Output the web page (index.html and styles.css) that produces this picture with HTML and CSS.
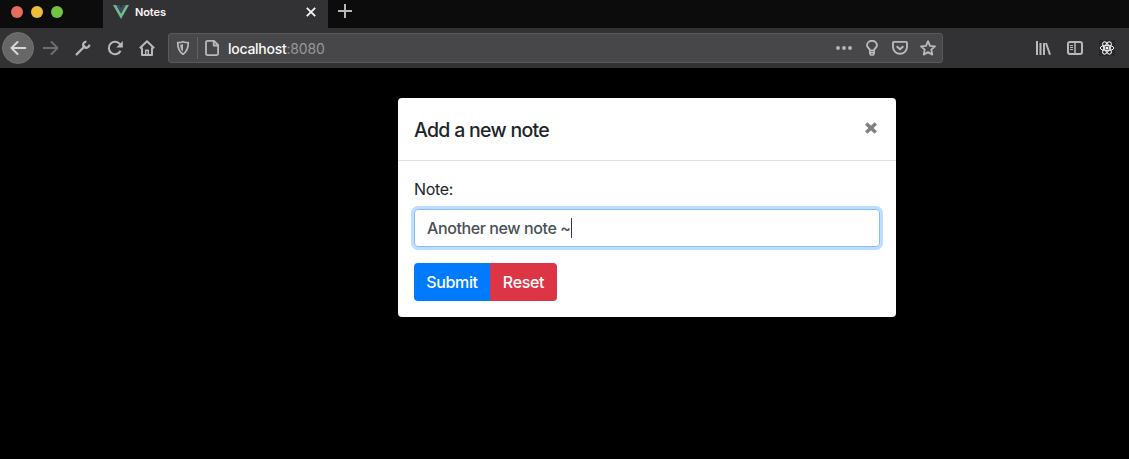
FILE: index.html
```
<!DOCTYPE html>
<html lang="en">
<head>
<meta charset="utf-8">
<title>Notes</title>
<link rel="stylesheet" href="styles.css">
</head>
<body>
<header class="tabs">
  <div class="lights"><i class="red"></i><i class="yellow"></i><i class="green"></i></div>
  <div class="tab">
    <svg class="logo" width="16" height="14" viewBox="0 0 16 14"><path fill="#72b98b" d="M0 0h3.200L8 8.400 12.800 0H16L8 14z"/><path fill="#3d4a63" d="M3.200 0h3L8 3.100 9.800 0h3L8 8.400z"/></svg>
    <span class="tab-title">Notes</span>
    <svg class="close-tab" width="10" height="10" viewBox="0 0 10 10"><path d="M.8.8l8.400 8.400M9.200.8L.8 9.200"/></svg>
  </div>
  <svg class="plus" width="14" height="14" viewBox="0 0 14 14"><path d="M7 0v14M0 7h14"/></svg>
</header>
<nav class="toolbar">
  <div class="back"><svg class="icon" width="16" height="16" viewBox="0 0 16 16"><path d="M15.500 8H1.500M7.500 2L1.500 8l6 6"/></svg></div>
  <svg class="icon forward" width="16" height="16" viewBox="0 0 16 16"><path d="M.5 8h14M8.500 2l6 6-6 6"/></svg>
  <svg class="icon" width="16" height="16" viewBox="0 0 16 16"><path d="M1.600 14.400L9 7" stroke-width="2.200" stroke-linecap="round"/><path d="M11.400 1.600A3.400 3.400 0 0 0 8.200 5.800L10.200 7.800A3.400 3.400 0 0 0 14.400 4.600" stroke-width="2.200"/><path d="M8.500 6l1.500 1.500" stroke-width="3"/></svg>
  <svg class="icon" width="16" height="16" viewBox="0 0 16 16"><path d="M13.200 4.500A6.200 6.200 0 1 0 13.600 10.700"/><path fill="currentColor" stroke="none" d="M15.800 1v6.500H9.300z"/></svg>
  <svg class="icon home" width="16" height="16" viewBox="0 0 16 16"><path d="M.8 8.300L8 1.200l7.200 7.100M3 7.500V15h10V7.500"/><path stroke-width="1.500" d="M6.700 14.500v-4.300h2.600v4.300"/></svg>
  <div class="address">
    <svg class="icon shield" width="14" height="16" viewBox="0 0 14 16"><path stroke-width="1.700" d="M7 1.700c2 .7 3.500.9 5.300.9 0 5.900-1.100 9-5.300 11.600C2.800 11.600 1.700 8.500 1.700 2.600 3.500 2.600 5 2.400 7 1.700z"/><path fill="currentColor" stroke="none" d="M7 4v7.500C5 9.800 4.300 8 4.200 4.800 5.300 4.700 6.200 4.500 7 4z"/></svg>
    <span class="divider"></span>
    <svg class="icon page" width="14" height="16" viewBox="0 0 14 16"><path stroke-width="1.800" d="M3 .9h6L13.100 5v8.600q0 1.500-1.500 1.500H2.500Q1 15.100 1 13.600V2.400Q1 .9 2.500.9zM8.700 1v4.500H13"/></svg>
    <span class="url">localhost<span class="port">:8080</span></span>
    <div class="actions">
      <svg class="icon" width="16" height="16" viewBox="0 0 16 16"><g fill="currentColor" stroke="none"><circle cx="2" cy="8" r="1.900"/><circle cx="8" cy="8" r="1.900"/><circle cx="14" cy="8" r="1.900"/></g></svg>
      <svg class="icon" width="16" height="16" viewBox="0 0 16 16"><path stroke-width="1.900" d="M6 10.500C6 8.500 3 7.900 3 5.300a5 4.500 0 0 1 10 0C13 7.900 10 8.500 10 10.500z"/><path stroke-width="1.500" d="M5.800 10.500v3l1 1.500h2.400l1-1.500v-3M6 12.700h4"/></svg>
      <svg class="icon" width="16" height="16" viewBox="0 0 16 16"><path stroke-width="1.900" d="M2 1.900h12q1 0 1 1V7A7 6.800 0 0 1 1 7V2.900q0-1 1-1z"/><path d="M4.700 6.200L8 9.300l3.300-3.100"/></svg>
      <svg class="icon" width="16" height="16" viewBox="0 0 16 16"><path stroke-width="1.800" d="M8 1.200l2 4.600 5 .5-3.700 3.300 1 5L8 12.100l-4.300 2.500 1-5L1 6.300l5-.5z"/></svg>
    </div>
  </div>
  <div class="tools">
    <svg class="icon" width="16" height="16" viewBox="0 0 16 16"><path d="M2 1v14M5.500 3v12M9 3v12M11 3l4 11.800"/></svg>
    <svg class="icon" width="16" height="16" viewBox="0 0 16 16"><rect x="1" y="2" width="14" height="12" rx="2"/><path stroke-width="1.500" d="M8 2v12"/><path stroke-width="1" d="M3 5.500h3M3 7.500h3M3 9.500h3"/></svg>
    <svg class="icon react" width="16" height="16" viewBox="0 0 16 16"><path fill="#27272a" stroke="none" d="M0 0h16v16H0z"/><g stroke-width="1"><ellipse cx="8" cy="8" rx="6.800" ry="2.700"/><ellipse cx="8" cy="8" rx="6.800" ry="2.700" transform="rotate(60 8 8)"/><ellipse cx="8" cy="8" rx="6.800" ry="2.700" transform="rotate(120 8 8)"/></g><circle cx="8" cy="8" r="1.500" fill="currentColor" stroke="none"/></svg>
  </div>
</nav>
<main>
  <section class="modal">
    <div class="modal-header"><h5>Add a new note</h5>
      <svg class="close" width="12" height="12" viewBox="0 0 12 12"><path d="M1.200 1.500l9.600 9M10.800 1.500l-9.600 9"/></svg>
    </div>
    <div class="modal-body">
      <div class="label">Note:</div>
      <div class="field"><span class="value">Another new note ~</span><i class="caret"></i></div>
      <div class="buttons"><button class="submit">Submit</button><button class="reset">Reset</button></div>
    </div>
  </section>
</main>
</body>
</html>
```

FILE: styles.css
```
* { box-sizing: border-box; }
body { margin: 0; height: 459px; background: #000; overflow: hidden; font-family: Inter, "Liberation Sans", sans-serif; font-size: 16px; }
svg { display: block; flex: none; fill: none; }
.tabs { height: 28px; display: flex; background: #0c0c0d; }
.lights { width: 103px; display: flex; gap: 8px; padding: 6px 0 0 11px; }
.lights i { width: 12px; height: 12px; border-radius: 50%; }
.red { background: #e46d5d; }
.yellow { background: #edbe3c; }
.green { background: #71c543; }
.tab { width: 225px; height: 28px; display: flex; align-items: flex-start; padding: 5px 12px 0 10px; background: #323234; }
.tab-title { margin-left: 6px; font-size: 11px; line-height: 15px; font-weight: 600; letter-spacing: -.1px; color: #f9f9fa; }
.close-tab { margin: 2px 0 0 auto; stroke: #f5f5f5; stroke-width: 1.8; }
.plus { margin: 4px 0 0 10px; stroke: #b8b8b9; stroke-width: 2; }
.toolbar { height: 40px; display: flex; align-items: center; padding-left: 2px; background: #323234; }
.icon { color: #b9b9ba; stroke: currentColor; stroke-width: 2; stroke-linejoin: round; }
.back { width: 32px; height: 32px; display: grid; place-items: center; border-radius: 50%; background: #676768; border: 1px solid #727273; }
.back .icon { color: #d8d8d8; stroke-linecap: round; }
.toolbar > .icon { margin-right: 16px; }
.toolbar > .forward { margin-left: 9px; color: #6e6e70; stroke-linecap: round; }
.toolbar > .home { margin-right: 13px; }
.address { width: 775px; height: 30px; display: flex; align-items: center; padding: 0 6px 0 7px; border: 1px solid #59595b; border-radius: 3px; background: #474749; }
.divider { width: 1px; height: 22px; margin: 0 7px; background: #626265; }
.url { position: relative; top: 1px; margin-left: 9px; font-size: 14px; line-height: 20px; font-weight: 500; letter-spacing: -.27px; color: #f9f9fa; white-space: nowrap; }
.port { font-weight: 400; letter-spacing: -.15px; color: #98989a; }
.actions { display: flex; gap: 12px; margin-left: auto; }
.tools { display: flex; gap: 16px; margin-left: 92px; }
.react { color: #f5f5f5; }
main { padding: 30px 0 0 398px; }
.modal { width: 498px; height: 219px; background: #fff; border-radius: 4px; color: #212529; }
.modal-header { height: 63px; display: flex; align-items: flex-start; justify-content: space-between; padding: 17px 19px 0 16px; border-bottom: 1px solid #dee2e6; }
h5 { margin: 0; font-size: 19.5px; line-height: 30px; font-weight: 550; letter-spacing: -.7px; }
.close { margin-top: 7px; stroke: #7f7f7f; stroke-width: 3.4; }
.modal-body { padding: 16px; font-weight: 430; letter-spacing: -.3px; }
.label { height: 24px; line-height: 24px; }
.field { height: 38px; margin: 8px 0 16px; display: flex; align-items: center; padding-left: 12px; border: 1px solid #80bdff; border-radius: 4px; box-shadow: 0 0 0 3px #bfdeff; color: #495057; }
.value { white-space: nowrap; font-weight: 500; letter-spacing: -.4px; }
.caret { width: 1px; height: 20px; background: #343a40; }
.buttons { display: flex; }
button { height: 38px; padding: 0; border: 0; font: inherit; font-weight: 500; letter-spacing: -.35px; color: #fff; }
.submit { width: 76px; border-radius: 4px 0 0 4px; background: #007bff; }
.reset { width: 67px; border-radius: 0 4px 4px 0; background: #dc3545; }
```
